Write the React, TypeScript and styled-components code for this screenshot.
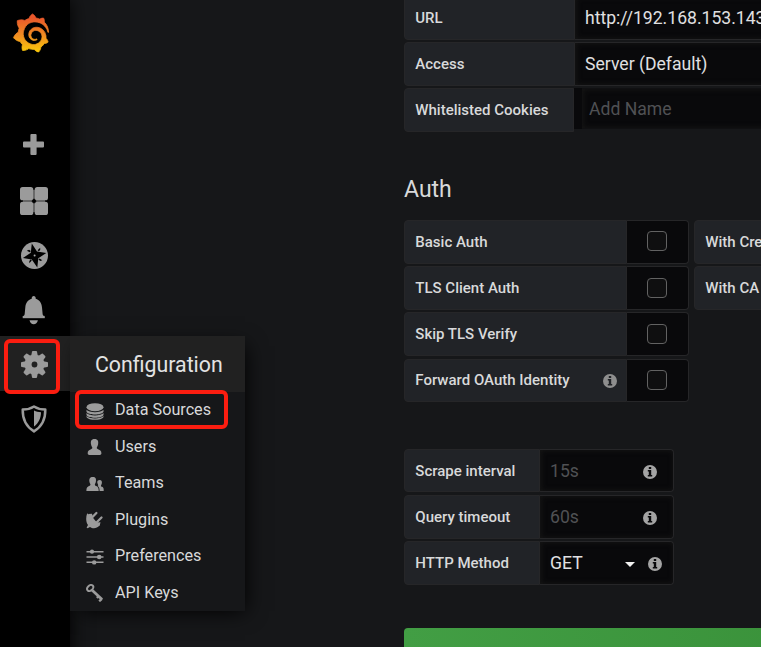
import React from 'react';
import styled, { createGlobalStyle, css } from 'styled-components';
import { SiGrafana } from 'react-icons/si';

const GlobalStyle = createGlobalStyle`
  * { box-sizing: border-box; }
  body {
    margin: 0;
    overflow: hidden;
    background: #161719;
    color: #d8d9da;
    font-family: Roboto, "Liberation Sans", sans-serif;
  }
`;

const Page = styled.div`
  display: grid;
  grid-template-columns: 70px minmax(0, 1fr);
  width: 100%;
  height: 647px;
  overflow: hidden;
`;

const Sidebar = styled.nav`
  position: relative;
  z-index: 1;
  background: #000;
  box-shadow: 0 0 18px #000;
`;

const Logo = styled.div`
  height: 117.6px;
  padding: 13.5px 0 0 11.5px;
  svg { display: block; overflow: visible; fill: url(#flame); stroke: url(#flame); stroke-width: 0.5px; }
`;

const Defs = styled.svg`
  position: absolute;
`;

const NavItem = styled.div<{ $active?: boolean }>`
  position: relative;
  display: flex;
  align-items: center;
  justify-content: center;
  height: 54.6px;
  padding: 2px 2px 0 0;
  color: #9b9b9b;
  background: ${p => (p.$active ? '#212121' : 'transparent')};
  svg { display: block; }
`;

const redOutline = css`
  border: 4px solid #fb1d10;
  border-radius: 6px;
`;

const GearMark = styled.span`
  ${redOutline}
  position: absolute;
  left: 4px;
  top: 3px;
  width: 56px;
  height: 55px;
  z-index: 3;
`;

const SubMenu = styled.div`
  position: absolute;
  left: 70px;
  top: 0;
  width: 175px;
  height: 275px;
  color: #d8d9da;
  background: #161719;
  box-shadow: 5px 5px 20px -5px #000;
`;

const SubMenuTitle = styled.div`
  height: 56px;
  padding-left: 25px;
  background: #212121;
  font-size: 21.3px;
  line-height: 57px;
  color: #e3e3e3;
`;

const SubMenuList = styled.div`
  display: grid;
  grid-auto-rows: 36.5px;
`;

const SubMenuItem = styled.div`
  position: relative;
  display: grid;
  grid-template-columns: 19px 1fr;
  column-gap: 10px;
  align-items: center;
  padding-left: 16px;
  font-size: 16.2px;
  line-height: 36px;
  white-space: nowrap;
  svg { display: block; color: #9b9b9b; position: relative; left: -0.5px; top: 0.5px; }
`;

const SourceMark = styled.span`
  ${redOutline}
  position: absolute;
  left: 5px;
  top: -2px;
  width: 153px;
  height: 39px;
`;

const Main = styled.main`
  width: 800px;
  padding-left: 334px;
`;

const Rows = styled.div`
  display: grid;
  grid-auto-rows: 43.7px;
  row-gap: 2.5px;
`;

const Settings = styled(Rows)`
  margin-top: -4px;
`;

const Intervals = styled(Rows)`
  margin-top: 46.4px;
`;

const Row = styled.div`
  display: flex;
`;

const Label = styled.label<{ $w: number }>`
  display: flex;
  align-items: center;
  justify-content: space-between;
  flex: 0 0 ${p => p.$w}px;
  padding: 0 9px 0 10.3px;
  background: #212327;
  border: 1px solid #262628;
  border-radius: 4px 0 0 4px;
  font-size: 15px;
  font-weight: 500;
  white-space: nowrap;
  svg { color: #8e8e8e; position: relative; top: 0.5px; }
`;

const Field = styled.div<{ $w: number; $muted?: boolean }>`
  display: flex;
  align-items: center;
  flex: 0 0 ${p => p.$w}px;
  padding-left: 10px;
  background: #09090b;
  border: 1px solid #262628;
  border-left: 0;
  border-radius: 0 4px 4px 0;
  box-shadow: inset 1px 0 5px 1px #141414;
  color: ${p => (p.$muted ? '#505154' : '#e0e0e1')};
  font-size: 17.6px;
  white-space: nowrap;
`;

const TagGap = styled.div`
  width: 8px;
  height: 41px;
  background: #09090b;
`;

const TagField = styled(Field)`
  height: 41px;
  padding-left: 7px;
  border-color: #101012;
`;

const Hint = styled.span<{ $right: number }>`
  margin-left: auto;
  margin-right: ${p => p.$right}px;
  color: #a4a4a4;
  svg { display: block; position: relative; top: 1px; }
`;

const Caret = styled.span`
  margin: 3px 0 0 42px;
  border: 5px solid transparent;
  border-top-color: #f0f0f0;
  border-bottom: 0;
`;

const Heading = styled.h3`
  margin: 43px 0 15px;
  height: 30px;
  font-size: 23px;
  font-weight: 400;
  line-height: 30px;
`;

const SwitchCell = styled.div`
  display: grid;
  place-items: center;
  width: 62px;
  margin-right: 5px;
  padding: 0 1px 1px 0;
  background: #09090b;
  border: 1px solid #262628;
  border-left: 0;
  border-radius: 0 4px 4px 0;
`;

const CheckBox = styled.span`
  width: 20px;
  height: 20px;
  border: 1px solid #626262;
  border-radius: 4px;
  background: #0f0f10;
`;

const Banner = styled.div`
  height: 50px;
  margin-top: 43.200px;
  border-radius: 4px;
  background: linear-gradient(90deg, #429e44, #399039);
`;

const InfoIcon = ({ size = 14 }: { size?: number }) => (
  <svg width={size} height={size} viewBox="0 0 14 14">
    <path fill="currentColor" fillRule="evenodd" d="M7 0a7 7 0 1 1 0 14A7 7 0 0 1 7 0ZM5.800 2.100v2h2.400v-2ZM4.800 5.100v1.400h1V10h-1v1.500h4.400V10h-1V5.100Z" />
  </svg>
);

const PlusIcon = () => (
  <svg width="22" height="23" viewBox="0 0 22 23" fill="currentColor">
    <path d="M8.400 0h4.200q1 0 1 1v6.600H20q1 0 1 1v4q0 1-1 1h-6.400V20q0 1-1 1H8.400q-1 0-1-1v-6.400H1q-1 0-1-1v-4q0-1 1-1h6.400V1q0-1 1-1Z" />
  </svg>
);

const GridIcon = () => (
  <svg width="28" height="30" viewBox="0 -2 28 30" fill="currentColor">
    <path fill="#555" d="M3 13h22v2H3zM13 3h2v22h-2z" />
    <path fill="#000" d="m14 11.500 2.500 2.500-2.500 2.500-2.500-2.500z" />
    <rect width="13.300" height="13.300" rx="2.600" />
    <rect x="14.700" width="13.300" height="13.300" rx="2.600" />
    <rect y="14.700" width="13.300" height="13.300" rx="2.600" />
    <rect x="14.700" y="14.700" width="13.300" height="13.300" rx="2.600" />
  </svg>
);

const CompassIcon = () => (
  <svg width="28" height="27" viewBox="-1 0 28 27">
    <circle cx="13.500" cy="13.500" r="13.500" fill="currentColor" />
    <path fill="#000" d="M10.800 1.500 16 9.600 25.300 11 17.300 16.200 16.300 25.500 10.800 17.500 1.900 16 9.800 10.800ZM5.800 8.800l3 1.400 1-1.200-1.700-1.300ZM19.200 5.800l-2.600 2.500 1.200 1 1.400-1.300ZM21.300 18.200l-2.800-1.800-1 1.200 1.700 1.300ZM8.300 21.300l2.500-2.700-1.100-1-1.400 1.300Z" />
    <circle cx="13.600" cy="13.600" r="1" fill="#aaa" />
  </svg>
);

const BellIcon = () => (
  <svg width="24" height="30" viewBox="0 -1 24 30" fill="currentColor">
    <path d="M9.700 2.700C9.600 1 10.500 0 11.700 0s2.200 1 2 2.700c3.700 1.100 5.900 4.200 6.300 8.700l.6 6.400c.1 1 .4 1.500 1.100 2.100q1 .8.7 2.100H1.100q-.4-1.200.6-2c.6-.6.9-1.100 1-2.200l.6-6.400C3.700 6.900 5.900 3.800 9.700 2.700ZM7.500 24.200h8.400c-.6 2.500-2.200 4-4.200 4s-3.600-1.500-4.200-4Z" />
    <path d="M.7 19.900h22v2.300H.7z" />
  </svg>
);

const GearIcon = () => (
  <svg width="28" height="27" viewBox="-1 0 28 27">
    <g fill="currentColor">
      <circle cx="13.500" cy="13.500" r="10" />
      {[0, 45, 90, 135, 180, 225, 270, 315].map(angle => (
        <path key={angle} transform={`rotate(${angle} 13.5 13.5)`} d="m11 .8.500-.8h4l.5.800.8 4H10.200Z" />
      ))}
    </g>
    <circle cx="13.500" cy="13.500" r="2.900" fill="#212121" />
  </svg>
);

const ShieldIcon = () => (
  <svg width="26" height="28" viewBox="0 0 26 28">
    <path d="M13 1.500c3.400 2.200 7.100 3.100 11.300 3.100.2 8.900-2.600 16.400-11.300 21.800C4.300 21 1.500 13.500 1.700 4.600 5.900 4.600 9.600 3.700 13 1.500Z" fill="none" stroke="currentColor" strokeWidth="2.500" strokeLinejoin="round" />
    <path fill="currentColor" d="M13 5.500c2.200 1 4.500 1.600 7 1.700-.1 5.900-2.300 10.800-7 14.300Z" />
  </svg>
);

const iconProps = { width: 18, height: 18, viewBox: '0 0 18 18', fill: 'currentColor' };

const DatabaseIcon = () => (
  <svg {...iconProps}>
    <ellipse cx="9" cy="5.200" rx="8.500" ry="4" />
    <path d="M.5 7.800C2.800 11 15.200 11 17.500 7.800V9.700c-2 3.700-15 3.700-17 0ZM.5 11C2.800 14.200 15.200 14.200 17.500 11v1.900c-2 3.700-15 3.700-17 0ZM.5 14.100c2.300 3.200 14.700 3.200 17 0v.8c-2 3.800-15 3.800-17 0Z" />
  </svg>
);

const UserIcon = () => (
  <svg {...iconProps}>
    <path d="M8.500 1C12 1 12.600 3.500 12.100 6.200c-.3 1.700-.9 2.300-1.200 3.100-.3 1 .1 1.500 1.200 2 2.200.9 3.400 1.700 3.300 4.200 0 .9-.7 1.400-1.600 1.400H3.300c-.9 0-1.600-.5-1.600-1.400-.1-2.500 1.100-3.300 3.300-4.200 1.100-.5 1.500-1 1.200-2-.3-.8-.9-1.400-1.200-3.100C4.500 3.500 5.100 1 8.500 1Z" />
  </svg>
);

const TeamIcon = () => (
  <svg {...iconProps}>
    <path d="M6.800 2c2.900 0 3.600 2.100 3.100 4.400-.2 1.500-.8 2.100-1 2.800-.2.900.2 1.300 1.200 1.800 1.800.8 2.600 1.400 2.600 4.600v.3H.4v-.5C.4 12.600 1.300 11.800 3 11c1.200-.5 1.600-.9 1.400-1.800-.2-.7-.8-1.300-1-2.800C3 4.100 3.900 2 6.800 2Z" />
    <path d="M13.500 5c2.300 0 2.700 1.700 2.300 3.500-.2 1.200-.8 1.500-.8 2.200 0 .6.400.8 1.100 1.100 1.200.5 1.700 1.200 1.600 4.100h-4.100c0-2.800-.6-3.900-2-4.800.7-.3.700-.8.300-1.800-.3-.8-.7-1.400-.6-2.500C11.500 5.800 12.200 5 13.500 5Z" />
  </svg>
);

const PlugIcon = () => (
  <svg {...iconProps}>
    <path d="M1.200 2.200 13.500 14.500C10.500 18 6.500 17.800 4 15.900L1.500 17.300l-.9-.9L2 14C-.2 11.200-.3 6 1.200 2.200Z" />
    <path d="m6 6.500 4.400-4.500M10.500 11.500l5-5" fill="none" stroke="currentColor" strokeWidth="2.300" strokeLinecap="round" />
    <path d="m2 3 4-.2 1 4 3.800 4.700 3.700-.2-.8 3.500H8Z" />
  </svg>
);

const SlidersIcon = () => (
  <svg {...iconProps}>
    <path d="M.5 2.900h17v1.500H.5ZM.5 8.200h17v1.500H.5ZM.5 13.600h17v1.500H.5Z" />
    <circle cx="6" cy="3.700" r="2.100" />
    <circle cx="13.200" cy="9" r="2.300" />
    <circle cx="8.200" cy="14.400" r="2.200" />
  </svg>
);

const KeyIcon = () => (
  <svg {...iconProps} fill="none" stroke="currentColor">
    <ellipse cx="4.200" cy="4" rx="2.500" ry="3.500" transform="rotate(45 4.200 4)" strokeWidth="1.900" />
    <path d="m6.200 6.200 9.900 9.400" strokeWidth="2.700" />
    <path d="m12.500 12-1.500 2m4.800.8L13.200 17.300" strokeWidth="2.300" />
  </svg>
);

const menuEntries = [
  { text: 'Data Sources', Icon: DatabaseIcon, marked: true },
  { text: 'Users', Icon: UserIcon },
  { text: 'Teams', Icon: TeamIcon },
  { text: 'Plugins', Icon: PlugIcon },
  { text: 'Preferences', Icon: SlidersIcon },
  { text: 'API Keys', Icon: KeyIcon },
];

const authOptions = [
  { text: 'Basic Auth', second: 'With Credentials' },
  { text: 'TLS Client Auth', second: 'With CA Cert' },
  { text: 'Skip TLS Verify' },
  { text: 'Forward OAuth Identity', info: true },
];

export default function App() {
  return (
    <Page>
      <GlobalStyle />
      <Sidebar>
        <Logo>
          <Defs width="0" height="0">
            <linearGradient id="flame" x1="0" y1="0" x2="0" y2="1">
              <stop offset="0.1" stopColor="#e9572b" />
              <stop offset="0.55" stopColor="#f08b22" />
              <stop offset="1" stopColor="#fbc90a" />
            </linearGradient>
          </Defs>
          <SiGrafana size={38} />
        </Logo>
        <NavItem><PlusIcon /></NavItem>
        <NavItem><GridIcon /></NavItem>
        <NavItem><CompassIcon /></NavItem>
        <NavItem><BellIcon /></NavItem>
        <NavItem $active>
          <GearIcon />
          <GearMark />
          <SubMenu>
            <SubMenuTitle>Configuration</SubMenuTitle>
            <SubMenuList>
              {menuEntries.map(({ text, Icon, marked }) => (
                <SubMenuItem key={text}>
                  <Icon />
                  <span>{text}</span>
                  {marked && <SourceMark />}
                </SubMenuItem>
              ))}
            </SubMenuList>
          </SubMenu>
        </NavItem>
        <NavItem><ShieldIcon /></NavItem>
      </Sidebar>
      <Main>
        <Settings>
          <Row><Label $w={171}>URL</Label><Field $w={300}>http://192.168.153.143:9090</Field></Row>
          <Row><Label $w={171}>Access</Label><Field $w={300}>Server (Default)</Field></Row>
          <Row><Label $w={170}>Whitelisted Cookies</Label><TagGap /><TagField $w={293} $muted>Add Name</TagField></Row>
        </Settings>
        <Heading>Auth</Heading>
        <Rows>
          {authOptions.map(({ text, second, info }) => (
            <Row key={text}>
              <Label $w={223}>{text}{info && <InfoIcon />}</Label>
              <SwitchCell><CheckBox /></SwitchCell>
              {second && <Label $w={223}>{second}</Label>}
            </Row>
          ))}
        </Rows>
        <Intervals>
          <Row><Label $w={136}>Scrape interval</Label><Field $w={134} $muted>15s<Hint $right={16.5}><InfoIcon /></Hint></Field></Row>
          <Row><Label $w={136}>Query timeout</Label><Field $w={134} $muted>60s<Hint $right={16.5}><InfoIcon /></Hint></Field></Row>
          <Row><Label $w={136}>HTTP Method</Label><Field $w={134}>GET<Caret /><Hint $right={11.5}><InfoIcon /></Hint></Field></Row>
        </Intervals>
        <Banner />
      </Main>
    </Page>
  );
}
